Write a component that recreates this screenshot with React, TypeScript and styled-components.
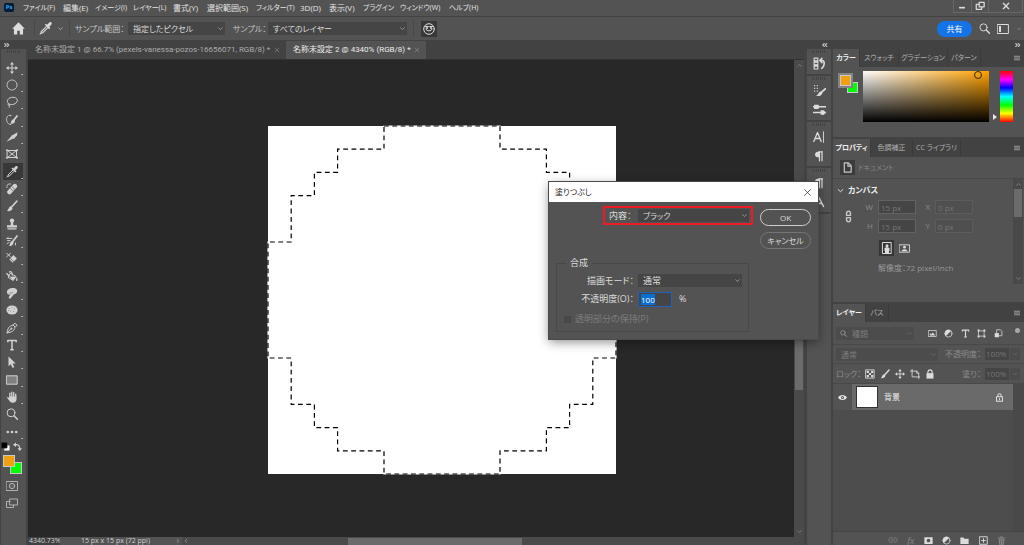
import React, { useEffect, useRef } from "react";
import styled, { createGlobalStyle, css } from "styled-components";

const c = {
  bar: "#535353",
  dark: "#424242",
  field: "#454545",
  canvas: "#282828",
  line: "#434343",
  text: "#dcdcdc",
  dim: "#7d7d7d",
};

const Global = createGlobalStyle`
  *, *::before, *::after { box-sizing: border-box; }
  body { margin: 0; background: ${c.bar}; }
  body, button, input, select {
    font-family: "Open Sans", "Noto Sans CJK JP", sans-serif;
    font-feature-settings: "palt";
    font-size: 8px;
    line-height: 12px;
    color: ${c.text};
  }
  button { border: 0; padding: 0; background: none; display: flex; align-items: center; justify-content: center; }
  svg { display: block; flex: none; }
`;

const Shell = styled.div`
  position: relative;
  height: 100vh;
  display: flex;
  flex-direction: column;
  overflow: hidden;
  white-space: nowrap;
  background: ${c.dark};
`;

/* ---------- icons ---------- */

const Svg = styled.svg.attrs({ "aria-hidden": true })`
  fill: none;
  stroke: currentColor;
  stroke-linecap: round;
  stroke-linejoin: round;
`;

const F = { fill: "currentColor", stroke: "none" };

const shapes: Record<string, React.ReactNode> = {
  move: <><path d="M6 1.5v9M1.5 6h9" /><path {...F} d="M6 0l2 2.6H4zM6 12l2-2.6H4zM0 6l2.6-2v4zM12 6L9.4 4v4z" /></>,
  ellipse: <circle cx="6" cy="6" r="5" strokeWidth=".9" strokeDasharray="2.200 1" />,
  lasso: <path d="M3.2 8.200C-.2 6.500 1.200 2.200 5.500 1.400c4-.7 6.500 1.400 5.600 3.900-.9 2.700-5 4-7.900 2.900-1.600-.7-1.600 1.400-.2 1.200 1.100-.2.9 1.200.2 2" />,
  quick: <><path d="M5 1.500C1 .5-.2 4.500 1 7.500c.7 2 2 3 4 3" strokeDasharray="1.800 1.300" /><path d="M11 2L7.500 6.500" strokeWidth="1.800" /><path {...F} d="M7 5.500c1.500 0 2.300 1.200 1.800 2.500C8.200 9.600 6 10 4 9.600 5.500 8.800 5 6 7 5.500z" /></>,
  slice: <><path {...F} d="M.5 10.800L5.500 5l2.300 2.300z" /><path {...F} d="M6 4.500L11.500 1.200l-.5 3.300-2.500 2.500z" /><path d="M6 5l2 2" strokeWidth="1.500" /></>,
  frame: <><path d="M1.500 2.500h9v7h-9zM1.500 2.500l9 7M10.500 2.500l-9 7" /><path {...F} d="M0 1.500h2v1.500H0zM10 1.500h2v1.500h-2zM0 9h2v1.500H0zM10 9h2v1.500h-2z" /></>,
  eyedropper: <><path d="M6.800 4.200L2 9v1.200h1.200l4.800-4.800" /><path {...F} d="M5.400 2.600l4 4 1.100-1.100-1.100-1.100 1.900-1.900C12.600 1 10.800-.8 9.300.6L7.500 2.600l-1.100-1z" /><path d="M1.900 10.200l-.9.9" /></>,
  heal: <><path d="M4.500 1C2 .6.600 2 1 4.600" strokeDasharray="1.600 1.100" /><path d="M3.500 9L8.800 3.200" strokeWidth="4.600" /><path d="M4.600 5.600l2.800 2.600M6.200 3.900l2.800 2.600" stroke="#535353" strokeWidth=".7" /></>,
  brush: <><path d="M10.800 1.200L5.800 6.800" strokeWidth="1.700" /><path {...F} d="M4.600 6.200l2 2C6 10.500 3.500 11.500.8 11c2-1 1.500-3.800 3.800-4.800z" /></>,
  stamp: <><path {...F} d="M1 7.200h10v2.300H1zM1.500 10.300h9v1.200h-9zM5 4h2l.4 3.500H4.600z" /><circle {...F} cx="6" cy="2.600" r="2.200" /></>,
  history: <><path d="M11 1L6.800 6.500" strokeWidth="1.700" /><path {...F} d="M5.700 6l2 1.700C7 10.500 5 11.200 3 11c1.500-1.400.8-4 2.700-5z" /><path d="M1 3.500h5M1.500 5.500h2.500M1 3.500l1.400-1.400M1 8.500l2-1M9.500 8v2" strokeWidth=".9" /></>,
  eraser: <><path d="M.8 1.200l3.600 3.600M4.400 1.200L.8 4.800" /><path d="M5 9l4.200-4.200" strokeWidth="4.800" strokeLinecap="butt" /><path d="M4.500 6.500l3.300 3.300" stroke="#535353" strokeWidth=".7" /></>,
  bucket: <><path d="M4.500 3.500l5.500 3-2.800 4-4.700-3z" /><path {...F} d="M3.500 6.500l6.300.3-2.600 3.700z" /><path d="M6.500 5C6 2 4.500.8 3.500 2M.8 3.500L3 6M10.800 8v2.500" strokeWidth="1.200" /></>,
  smudge: <><path {...F} d="M1 4.500C1.500.8 9.500-.2 11 3c.8 2-1 4.200-3 4.300L4.500 11.500C3 12 2.300 10.800 3 9.700l1.300-2C2 8 .8 6.800 1 4.500z" /><path d="M4 5.500v1.500M6 5v1.500" stroke="#6a6a6a" strokeWidth=".6" /></>,
  sponge: <><ellipse {...F} cx="6" cy="6" rx="5.600" ry="4.600" /><path d="M3 4.500h.1M6 3.800h.1M8.500 5h.1M4.500 7h.1M7.500 7.500h.1M2.500 6.500h.1" stroke="#777" strokeWidth=".8" /></>,
  pen: <><path d="M1.200 10.800C1.500 6.500 3 4 7 3l2 2C8.500 8.700 5.500 10.500 1.200 10.800z" /><path d="M7.500 2.500l1.500-1.300 2 2-1.300 1.500M1.500 10.500l3.700-4" /><circle {...F} cx="5.500" cy="6.500" r="1" /></>,
  type: <path d="M1.800 3.200V1.500h8.400v1.700M6 1.500v9M4.200 10.700h3.600" strokeWidth="1.500" strokeLinecap="butt" />,
  select: <path {...F} d="M2.500.500l7.200 7H6.500l1.800 3.600-1.800.8-1.700-3.600-2.300 2z" />,
  rect: <path d="M.8 1.800h10.400v8.400H.8z" fill="#808080" />,
  hand: <><path {...F} d="M3 5.500h7.500v2.700c0 2-1.500 3.500-3.500 3.500-2.200 0-3.200-1-6-5.200C1.200 5.500 2.200 5.800 3 7z" /><path d="M3.900 6V2.200M5.800 6V1.200M7.700 6V1.700M9.700 6.500V3.200" strokeWidth="1.300" /></>,
  zoom: <><circle cx="5" cy="4.800" r="3.900" /><path d="M7.900 7.700l3.500 3.500" strokeWidth="1.500" /></>,
  dots: <><circle {...F} cx="1.800" cy="6" r="1.300" /><circle {...F} cx="6" cy="6" r="1.300" /><circle {...F} cx="10.200" cy="6" r="1.300" /></>,
  mask: <><path d="M.5 1.500h11v9H.5z" /><circle cx="6" cy="6" r="2.700" fill="#606060" /></>,
  screen: <><path d="M4 2h7.500v6H4z" /><path d="M4 4.500H.5v6h7V8" /></>,
  home: <path {...F} d="M6 .3L.2 6.200h1.600v5.300h3V8h2.400v3.500h3V6.200h1.600z" />,
  down: <path d="M3.500 5L6 7.300 8.500 5" />,
  up: <path d="M3.500 7L6 4.700 8.500 7" />,
  right: <path d="M5 3.500L7 6 5 8.500" />,
  left: <path d="M7 3.500L5 6l2 2.500" />,
  close: <path d="M2 2l8 8M10 2l-8 8" />,
  closeBold: <path d="M2 2l8 8M10 2l-8 8" strokeWidth="2" />,
  face: <><circle cx="6" cy="6" r="5.300" /><path d="M2.500 3.500h2.800M6.700 3.500h2.800M2.800 6c1 2.500 5.400 2.500 6.400 0" /><path {...F} d="M3 4.300h2v1.400H3zM7 4.300h2v1.400H7z" /></>,
  layout: <><path d="M.6 1.500h10.800v9H.6z" /><path {...F} d="M2 3h2v6H2z" /></>,
  minimize: <path d="M2.500 8h7" strokeWidth="2" strokeLinecap="butt" />,
  restore: <path d="M5 1.500h6v5.500H5zM5 4H1.500v6H8V7" strokeWidth="1.500" />,
  panelHistory: <><path d="M1 1h3.500v2.600H1zM1 4.700h3.500v2.600H1zM1 8.400h3.500V11H1z" /><path d="M6.500 3.300h2.300c2.200.8 2.200 5-.8 7.200M8.200 1.200L6.300 3.300l2 2" strokeWidth="1.400" /></>,
  panelBrush: <><path d="M1 1.500h1M3.500 1.500h1M1 4h1M3.500 4h1M1 6.500h1M3.500 6.500h1" strokeLinecap="butt" strokeWidth="1.200" /><path d="M11.300 4.500L7.500 8" strokeWidth="1.700" /><path {...F} d="M7 7l1.700 1.800c-1 2-3 2.700-6 2.200C5 10.300 5 7.500 7 7z" /></>,
  panelSliders: <><path d="M0 3.500h12M0 8.800h12" strokeWidth="1.300" /><path {...F} d="M1 1.500h4l1 2-1 2H1zM7 6.800l2.500-.2c2 .4 2 4 0 4.400L7 10.500z" /></>,
  character: <><path d="M.8 10.500L4.500 1.500l3.700 9M2.200 7.500h4.600" strokeWidth="1.300" /><path d="M10.500.8v10.500" strokeWidth=".9" /></>,
  glyphA: <path d="M1.500 10.500L6 1.500l4.500 9M3.200 7.500h5.600" strokeWidth="1.500" />,
  para: <><path {...F} d="M6.500 1.500v6C3.500 7.500 2 6.300 2 4.500s1.500-3 4.500-3z" /><path d="M6.500 1.800v9M9 1.800v9M6 1.800h3.500" strokeWidth="1.200" /></>,
  document: <path d="M2.500 1h4.500l3 3v7h-7.500zM6.500 1v3.500H10" strokeWidth="1.300" />,
  link: <path d="M4.200 5V3.400c0-3.200 3.600-3.200 3.600 0V5H4.200zM4.200 7v1.600c0 3.200 3.600 3.200 3.600 0V7H4.200z" strokeWidth="1.300" />,
  portrait: <><path d="M1.800.5h8.400v11H1.800z" /><circle {...F} cx="6" cy="3.800" r="1.500" /><path {...F} d="M3.500 6c1-1 4-1 5 0v3H8v2H4V9h-.5z" /></>,
  landscape: <><path d="M.5 2h11v8H.5z" /><circle {...F} cx="6" cy="4.600" r="1.500" /><path {...F} d="M2.800 9c.3-3 6.100-3 6.400 0z" /></>,
  image: <><path d="M1 2h10v8H1z" /><path {...F} d="M2.500 8.500v-3l2 1.500 2-2.500 3 4z" /></>,
  adjust: <><circle cx="6" cy="6" r="4.800" /><path {...F} d="M9.400 2.600a4.800 4.800 0 1 1-6.800 6.800z" transform="rotate(180 6 6)" /></>,
  shape: <><path d="M2.500 2.500h7v7h-7z" /><path {...F} d="M.8.800h2.500v2.500H.8zM8.700.8h2.500v2.500H8.700zM.8 8.700h2.500v2.500H.8zM8.700 8.700h2.500v2.500H8.700z" /></>,
  smart: <><path d="M4 1h4.500l2 2v6H4z" /><path {...F} d="M1 5.500h5.500V11H1z" /></>,
  checker: <><path d="M1 1h10v10H1z" /><path {...F} d="M2 2h2.700v2.700H2zM7.300 2H10v2.700H7.300zM4.700 4.700h2.600v2.600H4.700zM2 7.300h2.700V10H2zM7.300 7.300H10V10H7.300z" /></>,
  artboard: <path d="M0 2.500h8l2.500 2.500V12M2.500 0v9.500H12M8 2.500V5h2.500" />,
  lock: <><path {...F} d="M1.800 5h8.400v6.500H1.800z" /><path d="M3.500 5V3.500c0-3.400 5-3.400 5 0V5" strokeWidth="1.400" /></>,
  lockOutline: <><path d="M2 5h8v6H2zM3.800 5V3.300c0-3 4.400-3 4.400 0V5M6 7.200v1.800" strokeWidth="1.400" /></>,
  eye: <><path {...F} d="M0 6c2.500-4.500 9.500-4.500 12 0-2.500 4.500-9.500 4.500-12 0z" /><circle cx="6" cy="6" r="2" fill="#535353" stroke="none" /><circle {...F} cx="6" cy="6" r=".8" /></>,
  chain: <path d="M5 3.500H3.300c-3.200 0-3.200 5 0 5H5M7 3.500h1.700c3.200 0 3.200 5 0 5H7M4 6h4" />,
  maskAdd: <path {...F} fillRule="evenodd" d="M.5 1.500h11v9H.5zM6 3.600a2.400 2.400 0 1 0 .01 0z" />,
  folder: <path {...F} d="M.5 2h4l1.200 1.500h5.800V10.500H.5z" />,
  add: <path d="M1 1h10v10H1zM6 3.500v5M3.500 6h5" strokeWidth="1.200" />,
  trash: <><path {...F} d="M1 2h10v1.200H1zM4.500.5h3V2h-3zM2.200 4h7.600l-.6 7.500H2.800z" /><path d="M4.700 5.500v4.500M7.300 5.500v4.500" stroke="#535353" strokeWidth=".8" /></>,
  swap: <><path d="M3 3.500c4-.5 6 1.500 6 5" strokeWidth="1.600" /><path {...F} d="M0 3.500L4 .500v6zM9 12L6 8.200h6z" /></>,
  defaults: <><path d="M5 5h6v6H5z" fill="#fff" stroke="#ddd" /><path d="M1 1h7v7H1z" fill="#000" stroke="#222" /></>,
  menu: <path d="M0 2.500h12M0 6h12M0 9.500h12" strokeWidth="2.400" strokeLinecap="butt" />,
  expand: <path d="M1.500 3L4.500 6l-3 3M6.500 3l3 3-3 3" strokeWidth="2.200" />,
  collapse: <path d="M4.500 3l-3 3 3 3M9.500 3l-3 3 3 3" strokeWidth="2.200" />,
};

const Icon = ({ name, size = 12 }: { name: string; size?: number }) => (
  <Svg viewBox="0 0 12 12" width={size} height={size}>{shapes[name]}</Svg>
);

/* ---------- shared controls ---------- */

const SelectBox = styled.span<{ $w?: number; $dim?: boolean }>`
  position: relative;
  display: flex;
  align-items: center;
  width: ${(p) => p.$w}px;
  height: 13px;
  flex: none;
  background: ${(p) => (p.$dim ? "#4c4c4c" : c.field)};
  color: ${(p) => (p.$dim ? c.dim : c.text)};
  select {
    appearance: none;
    width: 100%;
    height: 13px;
    line-height: 13px;
    padding: 0 12px 0 5px;
    border: 0;
    background: none;
    color: inherit;
  }
  svg { position: absolute; right: 0; pointer-events: none; color: ${(p) => (p.$dim ? "#6c6c6c" : "#a8a8a8")}; }
`;

const Select = ({ id, value, w, dim, label }: { id?: string; value: string; w: number; dim?: boolean; label?: string }) => (
  <SelectBox $w={w} $dim={dim}>
    <select id={id} aria-label={label} defaultValue={value}><option>{value}</option></select>
    <Icon name="down" size={9} />
  </SelectBox>
);

const Sep = styled.span`
  width: 1px;
  height: 17px;
  background: #484848;
`;

/* ---------- top bars ---------- */

const MenuBar = styled.header`
  flex: none;
  height: 17px;
  display: flex;
  align-items: flex-start;
  background: ${c.bar};
  border-bottom: 1px solid ${c.line};
`;

const Logo = styled.span`
  width: 10px;
  height: 9px;
  margin: 3px 9px 0 4px;
  border-radius: 2px;
  background: #001e36;
  color: #31a8ff;
  font-size: 6px;
  line-height: 9px;
  font-weight: 700;
  text-align: center;
`;

const Menus = styled.nav`
  flex: 1;
  display: grid;
  grid-template-columns: 40px 32px 38px 40px 34px 49px 44px 29px 34px 37px 49px 40px;
`;

const MenuButton = styled.button<{ $kana: boolean }>`
  justify-content: flex-start;
  height: 15px;
  font-size: ${(p) => (p.$kana ? 7 : 8)}px;
  color: #e4e4e4;
`;

const WindowControls = styled.div`
  display: flex;
  width: 70px;
  height: 13px;
  margin-right: 1px;
  border: 1px solid #666;
  border-top: 0;
  color: #c8c8c8;
  button { flex: 1; }
  button + button { border-left: 1px solid #666; }
  button:last-child { flex: 2; }
`;

const OptionsBar = styled.div`
  flex: none;
  height: 24px;
  display: flex;
  align-items: center;
  padding: 0 2px 0 12px;
  background: ${c.bar};
  border-bottom: 1px solid ${c.line};
  label { color: #c4c4c4; }
`;

const OptGroup = styled.div<{ $gap?: number; $ml?: number; $end?: boolean }>`
  display: flex;
  align-items: center;
  gap: ${(p) => p.$gap ?? 4}px;
  margin-left: ${(p) => (p.$end ? "auto" : `${p.$ml ?? 0}px`)};
  color: #b8b8b8;
`;

const OptLabel = styled.label<{ $w: number }>`
  width: ${(p) => p.$w}px;
`;

const Pressed = styled.button`
  width: 16px;
  height: 16px;
  background: #383838;
  color: ${c.text};
`;

const Share = styled.button`
  width: 35px;
  height: 16px;
  border-radius: 8px;
  background: #1473e6;
  color: #fff;
`;

/* ---------- work area ---------- */

const Body = styled.div`
  flex: 1;
  min-height: 0;
  display: flex;
`;

const Tools = styled.aside`
  width: 28px;
  flex: none;
  display: flex;
  flex-direction: column;
  background: ${c.bar};
  border-right: 2px solid ${c.line};
  border-left: 1px solid ${c.line};
`;

const Strip = styled.div<{ $end?: boolean }>`
  flex: none;
  height: 8px;
  display: flex;
  align-items: center;
  justify-content: ${(p) => (p.$end ? "flex-end" : "flex-start")};
  padding: 0 3px;
  background: ${c.dark};
  color: #bcbcbc;
`;

const Grip = styled.div`
  height: 3px;
  width: 14px;
  margin: 1px auto;
  background: repeating-linear-gradient(90deg, #444 0 1px, transparent 1px 2px);
`;

const ToolList = styled.div`
  padding: 4px 3px 0 2px;
  display: flex;
  flex-direction: column;
`;

const Tool = styled.button<{ $on?: boolean; $single?: boolean }>`
  position: relative;
  height: 17px;
  width: 20px;
  padding-right: 2px;
  color: #d2d2d2;
  background: ${(p) => (p.$on ? "#383838" : "none")};
  &:nth-child(3n + 1) { margin-top: 1px; }
  ${(p) => !p.$single && css`
    &::after { content: ""; position: absolute; right: 0; bottom: 1px; width: 1px; height: 1px; background: #c0c0c0; box-shadow: -1px 0 #999; }
  `}
`;

const SwatchTools = styled.div`
  display: flex;
  justify-content: space-between;
  padding: 2px 4px 0 0;
  color: #d2d2d2;
`;

const ToolColors = styled.div`
  padding: 4px 0 0 2px;
`;

const PanelColors = styled.div`
  padding-top: 4px;
`;

const Swatches = styled.div<{ $size: number; $frame?: boolean }>`
  position: relative;
  width: ${(p) => p.$size + 7}px;
  height: ${(p) => p.$size + 7}px;
  button {
    position: absolute;
    width: ${(p) => p.$size}px;
    height: ${(p) => p.$size}px;
    border: 1px solid #c9c9c9;
  }
  button:first-child { right: 0; bottom: 0; background: #00ff00; }
  button:last-child {
    left: 0;
    top: 0;
    background: #f0a010;
    ${(p) => p.$frame && css`outline: 2px solid #858585;`}
  }
`;

const ModeTools = styled.div`
  display: flex;
  flex-direction: column;
  gap: 5px;
  padding: 6px 0 0 5px;
  color: #b0b0b0;
`;

const Work = styled.main`
  flex: 1;
  min-width: 0;
  display: flex;
  flex-direction: column;
  border-right: 3px solid ${c.line};
`;

const DocTabs = styled.div`
  flex: none;
  height: 19px;
  display: flex;
  background: ${c.dark};
  border-bottom: 1px solid #333;
`;

const DocTab = styled.button<{ $on?: boolean; $w: number }>`
  width: ${(p) => p.$w}px;
  justify-content: space-between;
  padding: 0 6px 0 7px;
  font-family: Roboto, "Noto Sans CJK JP", sans-serif;
  color: ${(p) => (p.$on ? "#ececec" : "#acacac")};
  background: ${(p) => (p.$on ? c.bar : "none")};
  svg { color: #9a9a9a; }
`;

const Stage = styled.div`
  flex: 1;
  min-height: 0;
  display: flex;
`;

const Viewport = styled.div`
  flex: 1;
  min-width: 0;
  overflow: hidden;
  padding: 66px 0 0 240px;
  background: ${c.canvas};
`;

const VScroll = styled.div`
  width: 10px;
  display: flex;
  flex-direction: column;
  justify-content: space-between;
  align-items: center;
  padding: 1px 0;
  background: #4a4a4a;
  color: #8a8a8a;
`;

const Thumb = styled.div<{ $h: number }>`
  width: 8px;
  height: ${(p) => p.$h}px;
  background: #6b6b6b;
`;

const Status = styled.footer`
  flex: none;
  height: 8px;
  display: flex;
  align-items: center;
  background: #4a4a4a;
  color: #d0d0d0;
  font-size: 7px;
  line-height: 8px;
  svg { color: #a0a0a0; }
`;

const ZoomLevel = styled.span`
  width: 32px;
  padding-left: 1px;
  background: #404040;
`;

const DocInfo = styled.span`
  width: 122px;
  display: flex;
  justify-content: space-between;
  padding-left: 21px;
  background: ${c.bar};
`;

const HThumb = styled.span`
  width: 174px;
  height: 7px;
  margin: 1px 0 0 158px;
  background: #6b6b6b;
`;

const marquee =
  "M5 0H10V1H12V2H13V3H14V5H15V10H14V12H13V13H12V14H10V15H5V14H3V13H2V12H1V10H0V5H1V3H2V2H3V1H5Z";

/* ---------- docks ---------- */

const Dock = styled.aside`
  width: 26px;
  flex: none;
  display: flex;
  flex-direction: column;
  background: ${c.bar};
  border-right: 2px solid ${c.line};
`;

const DockGroup = styled.div`
  display: flex;
  flex-direction: column;
  align-items: center;
  padding-bottom: 1px;
  border-bottom: 2px solid ${c.line};
  button { height: 19px; width: 22px; color: ${c.text}; }
`;

const Panels = styled.aside`
  width: 191px;
  flex: none;
  display: flex;
  flex-direction: column;
  background: ${c.bar};
`;

const Panel = styled.section<{ $h?: number }>`
  ${(p) => (p.$h ? `flex: none; height: ${p.$h}px;` : "flex: 1; min-height: 0;")}
  display: flex;
  flex-direction: column;
  border-bottom: 2px solid ${c.line};
  &:last-child { border-bottom: 0; }
`;

const PanelTabs = styled.div`
  flex: none;
  height: 18px;
  display: flex;
  background: ${c.dark};
  color: #999;
  > svg { margin: auto 4px auto auto; }
`;

const PanelTab = styled.button<{ $on?: boolean; $w: number }>`
  width: ${(p) => p.$w}px;
  font-size: 7px;
  font-weight: ${(p) => (p.$on ? 600 : 400)};
  color: ${(p) => (p.$on ? "#f0f0f0" : "#b0b0b0")};
  background: ${(p) => (p.$on ? c.bar : "none")};
  border-right: 1px solid #3b3b3b;
`;

const ColorBody = styled.div`
  display: flex;
  align-items: flex-start;
  padding: 4px 11px 0 7px;
`;

const ColorField = styled.div`
  position: relative;
  flex: 1;
  height: 51px;
  margin: 0 4px 0 5px;
  background: linear-gradient(to bottom, transparent, #000), linear-gradient(to right, #fff, #ffa200);
  &::after {
    content: "";
    position: absolute;
    right: 7px;
    top: 0;
    width: 8px;
    height: 8px;
    border: 1px solid #3a2a00;
    border-radius: 50%;
  }
`;

const HueArrow = styled.span`
  align-self: flex-end;
  margin: 0 3px 2px 0;
  border: 3px solid transparent;
  border-left: 4px solid #e8e8e8;
  border-right: 0;
`;

const Hue = styled.div`
  width: 13px;
  height: 51px;
  background: linear-gradient(to bottom, #f00, #f0f 17%, #00f 33%, #0ff 50%, #0f0 67%, #ff0 83%, #f00);
`;

const DocRow = styled.div`
  height: 22px;
  display: flex;
  align-items: center;
  gap: 3px;
  padding-left: 7px;
  font-size: 7px;
  color: #888;
  border-bottom: 1px solid #484848;
  span { display: grid; place-items: center; width: 15px; height: 15px; background: #3c3c3c; color: #c8c8c8; }
`;

const PropsBody = styled.div`
  flex: 1;
  min-height: 0;
  display: flex;
  justify-content: space-between;
`;

const CanvasProps = styled.div`
  padding: 5px 0 0 2px;
  h3 {
    display: flex;
    align-items: center;
    gap: 2px;
    margin: 0;
    font-size: 8px;
    line-height: 12px;
    color: #eee;
  }
`;

const SizeGrid = styled.div`
  display: grid;
  grid-template-columns: 26px 17px 38px 19px 38px;
  row-gap: 5px;
  align-items: center;
  margin-top: 4px;
  > svg { grid-row: 1 / 3; margin-left: 7px; color: #c8c8c8; }
  label { text-align: right; padding-right: 5px; color: #8c8c8c; }
  input {
    width: 100%;
    height: 14px;
    padding: 0 2px;
    border: 1px solid #626262;
    background: #454545;
    color: #757575;
  }
  input[data-off] { border-color: #5c5c5c; background: #4f4f4f; }
`;

const Orient = styled.div`
  display: flex;
  align-items: center;
  gap: 3px;
  margin: 7px 0 6px 44px;
  color: #d0d0d0;
  button { width: 15px; height: 16px; }
  button:first-child { background: #363636; }
`;

const Resolution = styled.div`
  margin-left: 43px;
  color: #979797;
`;

const PropsScroll = styled(VScroll)`
  height: 105px;
  justify-content: flex-start;
  margin-right: 1px;
  background: #494949;
  svg:last-child { margin-top: auto; }
`;

const LayerRow = styled.div<{ $h: number }>`
  flex: none;
  height: ${(p) => p.$h}px;
  display: flex;
  align-items: center;
  padding: 0 4px 0 3px;
  color: #8c8c8c;
  border-bottom: 1px solid #494949;
  label { flex: 1; text-align: right; padding-right: 4px; }
`;

const FilterIcons = styled.div`
  flex: 1;
  display: flex;
  align-items: center;
  justify-content: space-between;
  padding: 0 0 0 14px;
  color: #a2a2a2;
  button:last-child {
    width: 5px;
    height: 5px;
    margin: 0 0 6px 5px;
    border-radius: 50%;
    background: #a8a8a8;
  }
`;

const SearchSelect = styled.div`
  display: flex;
  align-items: center;
  width: 78px;
  height: 13px;
  padding-left: 4px;
  background: #4c4c4c;
  color: #aaa;
`;

const Percent = styled.input`
  width: 24px;
  height: 12px;
  padding: 0 1px;
  border: 0;
  background: ${c.field};
  color: #757575;
`;

const Stepper = styled.button`
  width: 10px;
  height: 12px;
  margin-left: 1px;
  color: #707070;
  background: #4c4c4c;
`;

const LockIcons = styled.div`
  display: flex;
  gap: 5px;
  padding-left: 4px;
  color: #a6a6a6;
`;

const LockLabel = styled.span`
  width: 25px;
`;

const LayerList = styled.div`
  flex: 1;
  min-height: 0;
  background: #4d4d4d;
  border-right: 11px solid #494949;
`;

const Layer = styled.div`
  display: flex;
  align-items: center;
  height: 26px;
  background: #6a6a6a;
  color: #f0f0f0;
  > button:first-child { width: 19px; height: 26px; background: ${c.bar}; color: #e4e4e4; }
  > svg { margin: 0 9px 0 auto; color: #dcdcdc; }
`;

const LayerThumb = styled.span`
  width: 22px;
  height: 22px;
  margin: 0 6px 0 4px;
  border: 1px solid #333;
  background: #fff;
`;

const LayerActions = styled.div`
  flex: none;
  height: 14px;
  display: flex;
  align-items: center;
  justify-content: space-between;
  padding: 3px 18px 0 55px;
  border-top: 1px solid #444;
  color: #dcdcdc;
  button { color: inherit; }
  button:nth-child(1), button:nth-child(2), button:last-child { color: #858585; }
  i { font-size: 9px; line-height: 9px; }
`;

/* ---------- dialog ---------- */

const Dialog = styled.form`
  position: absolute;
  left: 549px;
  top: 182px;
  width: 269px;
  padding-bottom: 7px;
  background: ${c.bar};
  box-shadow: 0 0 0 1px #4a4a4a, 0 3px 10px rgba(0, 0, 0, 0.45);
  font-size: 9px;
`;

const DialogTitle = styled.div`
  height: 20px;
  display: flex;
  align-items: center;
  justify-content: space-between;
  padding: 0 6px;
  background: #fff;
  color: #222;
  font-size: 8px;
  button { color: #333; }
`;

const DialogTop = styled.div`
  display: flex;
  justify-content: flex-end;
  align-items: flex-start;
  gap: 7px;
  padding: 4px 7px 0 0;
`;

const Highlight = styled.div`
  display: flex;
  align-items: center;
  justify-content: space-between;
  width: 150px;
  height: 19px;
  padding: 0 2px 0 4px;
  border: 2px solid #ed1c24;
`;

const Actions = styled.div`
  display: flex;
  flex-direction: column;
  gap: 6px;
  padding-top: 3px;
`;

const Pill = styled.button<{ $main?: boolean }>`
  width: 51px;
  height: 17px;
  border: 1px solid ${(p) => (p.$main ? "#cfcfcf" : "#757575")};
  border-radius: 9px;
`;

const Group = styled.fieldset`
  width: 193px;
  margin: 9px 0 0 7px;
  padding: 5px 0 3px;
  border: 1px solid #484848;
  legend { margin-left: 9px; padding: 0 4px; line-height: 10px; }
  select { font-size: 9px; }
`;

const Row = styled.div<{ $h: number }>`
  display: flex;
  align-items: center;
  height: ${(p) => p.$h}px;
  > label { width: 81px; padding-right: 4px; text-align: right; flex: none; }
`;

const Opacity = styled.input`
  width: 34px;
  height: 15px;
  margin-right: 7px;
  padding: 0 2px;
  border: 1px solid #1f62b8;
  outline: 0;
  background: ${c.field};
  &::selection { background: #0a6fd0; color: #fff; }
`;

const Preserve = styled.div`
  display: flex;
  align-items: center;
  height: 18px;
  padding-left: 7px;
  color: ${c.dim};
  input { appearance: none; width: 7px; height: 7px; margin: 0 4px 0 0; background: #4a4a4a; border: 1px solid #474747; }
`;

function FillDialog() {
  const opacity = useRef<HTMLInputElement>(null);
  useEffect(() => {
    opacity.current?.focus();
    opacity.current?.select();
  }, []);
  return (
    <Dialog role="dialog" aria-label="塗りつぶし" onSubmit={(e) => e.preventDefault()}>
      <DialogTitle>
        塗りつぶし
        <button type="button" aria-label="閉じる"><Icon name="close" size={9} /></button>
      </DialogTitle>
      <DialogTop>
        <Highlight>
          <label htmlFor="content">内容：</label>
          <Select id="content" value="ブラック" w={111} />
        </Highlight>
        <Actions>
          <Pill $main>OK</Pill>
          <Pill type="button">キャンセル</Pill>
        </Actions>
      </DialogTop>
      <Group>
        <legend>合成</legend>
        <Row $h={15}>
          <label htmlFor="mode">描画モード：</label>
          <Select id="mode" value="通常" w={104} />
        </Row>
        <Row $h={22}>
          <label htmlFor="opacity">不透明度(O)：</label>
          <Opacity id="opacity" ref={opacity} defaultValue="100" />%
        </Row>
        <Preserve>
          <input type="checkbox" id="preserve" disabled />
          <label htmlFor="preserve">透明部分の保持(P)</label>
        </Preserve>
      </Group>
    </Dialog>
  );
}

const menus = ["ファイル(F)", "編集(E)", "イメージ(I)", "レイヤー(L)", "書式(Y)", "選択範囲(S)", "フィルター(T)", "3D(D)", "表示(V)", "プラグイン", "ウィンドウ(W)", "ヘルプ(H)"];
const isKana = (s: string) => /^[\u30a0-\u30ff]/.test(s);

const tools = ["move", "ellipse", "lasso", "quick", "slice", "frame", "eyedropper", "heal", "brush", "stamp", "history", "eraser", "bucket", "smudge", "sponge", "pen", "type", "select", "rect", "hand", "zoom", "dots"];

const dockGroups = [["panelHistory"], ["panelBrush", "panelSliders"], ["character", "para"], ["para", "glyphA"]];

export default function App() {
  return (
    <Shell>
      <Global />
      <MenuBar>
        <Logo>Ps</Logo>
        <Menus>{menus.map((m) => <MenuButton key={m} $kana={isKana(m)}>{m}</MenuButton>)}</Menus>
        <WindowControls>
          <button aria-label="最小化"><Icon name="minimize" size={10} /></button>
          <button aria-label="元に戻す"><Icon name="restore" size={10} /></button>
          <button aria-label="閉じる"><Icon name="closeBold" size={8} /></button>
        </WindowControls>
      </MenuBar>

      <OptionsBar>
        <OptGroup $gap={9}>
          <button aria-label="ホーム"><Icon name="home" size={13} /></button>
          <Sep />
        </OptGroup>
        <OptGroup $ml={4}>
          <button aria-label="スポイト"><Icon name="eyedropper" size={13} /></button>
          <Icon name="down" size={9} />
          <Sep />
        </OptGroup>
        <OptGroup $ml={5}>
          <OptLabel htmlFor="area" $w={49}>サンプル範囲：</OptLabel>
          <Select id="area" value="指定したピクセル" w={97} />
        </OptGroup>
        <OptGroup $ml={8}>
          <OptLabel htmlFor="sample" $w={31}>サンプル：</OptLabel>
          <Select id="sample" value="すべてのレイヤー" w={139} />
        </OptGroup>
        <OptGroup $ml={6} $gap={7}>
          <Sep />
          <Pressed aria-label="サンプルリング"><Icon name="face" /></Pressed>
        </OptGroup>
        <OptGroup $gap={7} $end>
          <Share>共有</Share>
          <button aria-label="検索"><Icon name="zoom" size={11} /></button>
          <button aria-label="ワークスペース"><Icon name="layout" /></button>
          <Icon name="down" size={6} />
        </OptGroup>
      </OptionsBar>

      <Body>
        <Tools>
          <Strip><Icon name="expand" size={6} /></Strip>
          <Grip />
          <ToolList>
            {tools.map((t) => (
              <Tool key={t} aria-label={t} $on={t === "eyedropper"} $single={t === "frame" || t === "zoom"}>
                <Icon name={t} />
              </Tool>
            ))}
          </ToolList>
          <SwatchTools>
            <Icon name="defaults" size={9} />
            <Icon name="swap" size={9} />
          </SwatchTools>
          <ToolColors>
            <Swatches $size={12}><button aria-label="背景色" /><button aria-label="描画色" /></Swatches>
          </ToolColors>
          <ModeTools><Icon name="mask" /><Icon name="screen" /></ModeTools>
        </Tools>

        <Work>
          <DocTabs>
            <DocTab $w={258}>名称未設定 1 @ 66.7% (pexels-vanessa-pozos-16656071, RGB/8) *<Icon name="close" size={6} /></DocTab>
            <DocTab $on $w={140}>名称未設定 2 @ 4340% (RGB/8) *<Icon name="close" size={6} /></DocTab>
          </DocTabs>
          <Stage>
            <Viewport>
              <svg width="348" height="348" viewBox="0 0 15 15" overflow="visible" role="img" aria-label="カンバス">
                <rect width="15" height="15" fill="#fff" />
                <path d={marquee} fill="none" stroke="#fff" strokeWidth="1.200" vectorEffect="non-scaling-stroke" />
                <path d={marquee} fill="none" stroke="#000" strokeWidth="1.200" strokeDasharray="4.800 3.500" vectorEffect="non-scaling-stroke" />
              </svg>
            </Viewport>
            <VScroll>
              <Icon name="up" size={9} />
              <Thumb $h={183} />
              <Icon name="down" size={9} />
            </VScroll>
          </Stage>
          <Status>
            <ZoomLevel>4340.73%</ZoomLevel>
            <DocInfo>15 px x 15 px (72 ppi)<Icon name="right" size={8} /></DocInfo>
            <Icon name="left" size={8} />
            <HThumb />
          </Status>
        </Work>

        <Dock>
          <Strip $end><Icon name="collapse" size={6} /></Strip>
          {dockGroups.map((g, i) => (
            <DockGroup key={i}>
              <Grip />
              {g.map((n) => <button key={n} aria-label={n}><Icon name={n} size={n.startsWith("panel") ? 13 : 12} /></button>)}
            </DockGroup>
          ))}
        </Dock>

        <Panels>
          <Strip $end><Icon name="expand" size={6} /></Strip>
          <Panel $h={90}>
            <PanelTabs>
              <PanelTab $on $w={27}>カラー</PanelTab>
              <PanelTab $w={39}>スウォッチ</PanelTab>
              <PanelTab $w={49}>グラデーション</PanelTab>
              <PanelTab $w={33}>パターン</PanelTab>
              <Icon name="menu" size={6} />
            </PanelTabs>
            <ColorBody>
              <PanelColors>
                <Swatches $size={11} $frame><button aria-label="背景色" /><button aria-label="描画色" /></Swatches>
              </PanelColors>
              <ColorField />
              <HueArrow />
              <Hue />
            </ColorBody>
          </Panel>

          <Panel $h={165}>
            <PanelTabs>
              <PanelTab $on $w={38}>プロパティ</PanelTab>
              <PanelTab $w={42}>色調補正</PanelTab>
              <PanelTab $w={48}>CC ライブラリ</PanelTab>
              <Icon name="menu" size={6} />
            </PanelTabs>
            <DocRow><span><Icon name="document" size={11} /></span>ドキュメント</DocRow>
            <PropsBody>
              <CanvasProps>
                <h3><Icon name="down" size={11} />カンバス</h3>
                <SizeGrid>
                  <Icon name="link" size={13} />
                  <label htmlFor="w">W</label><input id="w" defaultValue="15 px" />
                  <label htmlFor="x">X</label><input id="x" data-off defaultValue="0 px" />
                  <label htmlFor="h">H</label><input id="h" defaultValue="15 px" />
                  <label htmlFor="y">Y</label><input id="y" data-off defaultValue="0 px" />
                </SizeGrid>
                <Orient>
                  <button aria-label="縦"><Icon name="portrait" /></button>
                  <button aria-label="横"><Icon name="landscape" size={11} /></button>
                </Orient>
                <Resolution>解像度：72 pixel/inch</Resolution>
              </CanvasProps>
              <PropsScroll>
                <Icon name="up" size={9} />
                <Thumb $h={28} />
                <Icon name="down" size={9} />
              </PropsScroll>
            </PropsBody>
          </Panel>

          <Panel>
            <PanelTabs>
              <PanelTab $on $w={33}>レイヤー</PanelTab>
              <PanelTab $w={23}>パス</PanelTab>
              <Icon name="menu" size={6} />
            </PanelTabs>
            <LayerRow $h={23}>
              <SearchSelect><Icon name="zoom" size={7} /><Select label="種類" value="種類" w={67} dim /></SearchSelect>
              <FilterIcons>
                {["image", "adjust", "type", "shape", "smart"].map((n) => <button key={n} aria-label={n}><Icon name={n} size={9} /></button>)}
                <button aria-label="フィルター" />
              </FilterIcons>
            </LayerRow>
            <LayerRow $h={19}>
              <Select label="描画モード" value="通常" w={102} dim />
              <label htmlFor="lo">不透明度：</label>
              <Percent id="lo" defaultValue="100%" /><Stepper aria-label="不透明度"><Icon name="down" size={8} /></Stepper>
            </LayerRow>
            <LayerRow $h={20}>
              <LockLabel>ロック：</LockLabel>
              <LockIcons>{["checker", "brush", "move", "artboard", "lock"].map((n) => <button key={n} aria-label={n}><Icon name={n} size={10} /></button>)}</LockIcons>
              <label htmlFor="lf">塗り：</label>
              <Percent id="lf" defaultValue="100%" /><Stepper aria-label="塗り"><Icon name="down" size={8} /></Stepper>
            </LayerRow>
            <LayerList>
              <Layer>
                <button aria-label="表示"><Icon name="eye" size={9} /></button>
                <LayerThumb />背景
                <Icon name="lockOutline" size={9} />
              </Layer>
            </LayerList>
            <LayerActions>
              <button aria-label="リンク"><Icon name="chain" size={10} /></button>
              <button><i>fx</i></button>
              {["maskAdd", "adjust", "folder", "add", "trash"].map((n) => <button key={n} aria-label={n}><Icon name={n} size={9} /></button>)}
            </LayerActions>
          </Panel>
        </Panels>
      </Body>

      <FillDialog />
    </Shell>
  );
}
